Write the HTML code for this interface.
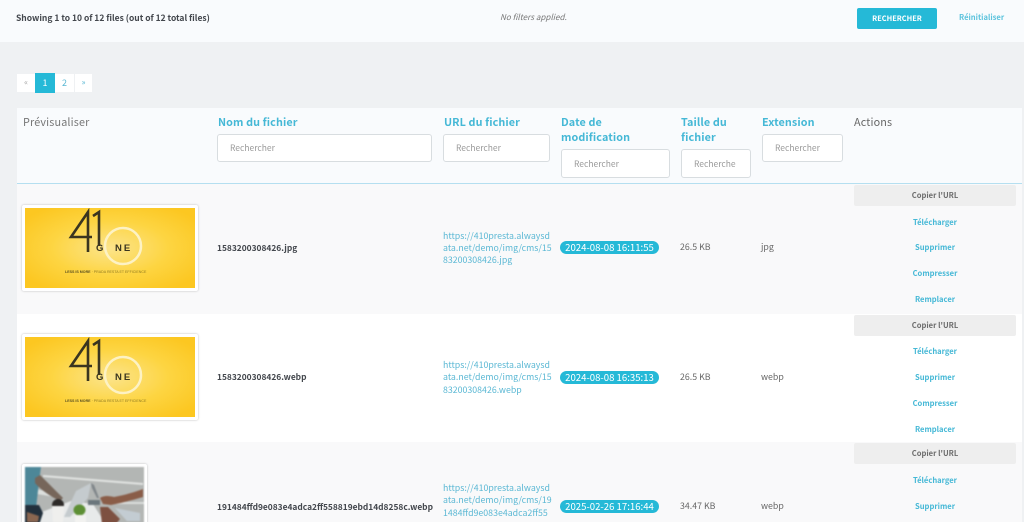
<!DOCTYPE html>
<html><head><meta charset="utf-8"><style>
html,body{margin:0;padding:0;width:1024px;height:522px;overflow:hidden;background:#eff1f3}
body{position:relative;font-family:"Noto Sans CJK SC","Liberation Sans",sans-serif;color:#666}
.a{position:absolute;white-space:nowrap}
.bar{left:0;top:0;width:1024px;height:42px;background:#f9fbfd}
.h{font-size:10.8px;line-height:15px;color:#45b8d6;font-weight:700;letter-spacing:.1px}
.ip{background:#fff;border:1px solid #d8dde0;border-radius:3px;box-sizing:border-box;font-size:8.5px;color:#999;padding-left:12px}
.row{left:17px;width:1005px}
.t{font-size:8.8px;line-height:12px}
.n{color:#43474d;font-weight:700;font-size:8.4px}
.u{color:#5bb8d4;font-size:8.8px;line-height:12.4px}
.d{background:#25b9d7;color:#fff;border-radius:7px;height:13px;line-height:13px;font-size:9.6px;text-align:center}
.c{left:854px;width:162px;height:21px;background:#eeeeee;text-align:center;line-height:22px;font-size:7.6px;font-weight:700;color:#6c6c6c;border-radius:2px}
.l{left:854px;width:162px;text-align:center;font-size:7.6px;line-height:12px;font-weight:700;color:#45b8d6}
.th{background:#fff;box-shadow:0 0 2px #bbb;border-radius:2px;box-sizing:border-box;padding:3px}
</style></head><body>
<div class="a bar"></div>
<div class="a" style="left:16px;top:12px;font-size:8.5px;line-height:12px;font-weight:700;color:#43474d">Showing 1 to 10 of 12 files (out of 12 total files)</div>
<div class="a" style="left:500px;top:12px;font-size:8.1px;line-height:12px;font-style:italic;color:#777">No filters applied.</div>
<div class="a" style="left:857px;top:8px;width:80px;height:21px;background:#25b9d7;border-radius:2px;color:#fff;font-size:7.4px;font-weight:700;line-height:21px;text-align:center">RECHERCHER</div>
<div class="a" style="left:959px;top:12px;font-size:7.6px;line-height:12px;font-weight:700;color:#5cc3dd">Réinitialiser</div>

<div class="a" style="left:17px;top:74px;width:18px;height:18px;background:#fff;color:#aaa;font-size:8px;text-align:center;line-height:18px">«</div>
<div class="a" style="left:35px;top:73px;width:20px;height:20px;background:#25b9d7;color:#fff;font-size:9px;text-align:center;line-height:20px">1</div>
<div class="a" style="left:55px;top:74px;width:19px;height:18px;background:#fff;color:#5bb8d4;font-size:9px;text-align:center;line-height:18px">2</div>
<div class="a" style="left:75px;top:74px;width:17px;height:18px;background:#fff;color:#5bb8d4;font-size:8px;text-align:center;line-height:18px">»</div>

<div class="a" style="left:17px;top:108px;width:1005px;height:75px;background:#f9fbfd"></div>
<div class="a" style="left:17px;top:183px;width:1005px;height:1px;background:#b5dff0"></div>
<div class="a row" style="top:184px;height:130px;background:#f9f9fa"></div>
<div class="a row" style="top:314px;height:128px;background:#fff"></div>
<div class="a row" style="top:442px;height:80px;background:#f9f9fa"></div>

<div class="a h" style="left:23px;top:115px;color:#777;font-weight:400;letter-spacing:.15px">Prévisualiser</div>
<div class="a h" style="left:218px;top:115px">Nom du fichier</div>
<div class="a h" style="left:444px;top:115px">URL du fichier</div>
<div class="a h" style="left:561px;top:115px">Date de<br>modification</div>
<div class="a h" style="left:681px;top:115px">Taille du<br>fichier</div>
<div class="a h" style="left:762px;top:115px">Extension</div>
<div class="a h" style="left:854px;top:115px;color:#666;font-weight:400;letter-spacing:.15px">Actions</div>

<div class="a ip" style="left:217px;top:134px;width:215px;height:28px;line-height:26px">Rechercher</div>
<div class="a ip" style="left:443px;top:134px;width:107px;height:28px;line-height:26px">Rechercher</div>
<div class="a ip" style="left:561px;top:149px;width:109px;height:29px;line-height:28px">Rechercher</div>
<div class="a ip" style="left:681px;top:149px;width:70px;height:29px;line-height:28px;overflow:hidden">Recherche</div>
<div class="a ip" style="left:762px;top:134px;width:81px;height:28px;line-height:26px">Rechercher</div>

<svg width="0" height="0" style="position:absolute"><defs>
<radialGradient id="y" cx=".5" cy=".5" r=".62"><stop offset="0" stop-color="#fce48c"/><stop offset=".55" stop-color="#fdd542"/><stop offset="1" stop-color="#fcc721"/></radialGradient>
<symbol id="logo" viewBox="0 0 170 80">
<rect width="170" height="80" fill="url(#y)"/>
<path d="M63 44 V4 L46 29 H67" fill="none" stroke="#3a3520" stroke-width="2.6"/>
<path d="M68 8 L74 4 V38" fill="none" stroke="#3a3520" stroke-width="2.6"/>
<circle cx="98" cy="38" r="18" fill="none" stroke="#fdf2c4" stroke-width="2.5"/>
<text x="71" y="43" font-family="Liberation Sans,sans-serif" font-size="9.5" font-weight="700" fill="#3a3520">G</text>
<text x="90" y="43" font-family="Liberation Sans,sans-serif" font-size="9.5" font-weight="700" letter-spacing="2" fill="#3a3520">NE</text>
<text x="40" y="65" font-family="Liberation Sans,sans-serif" font-size="3.6" font-weight="700" fill="#5e5220">LESS IS MORE <tspan font-weight="400" fill="#927b20">· PRADA RESTA ET EFFICIENCE</tspan></text>
</symbol></defs></svg>

<div class="a th" style="left:22px;top:205px;width:176px;height:86px"><svg width="170" height="80" style="filter:blur(.35px)"><use href="#logo"/></svg></div>
<div class="a th" style="left:22px;top:334px;width:176px;height:86px"><svg width="170" height="80" style="filter:blur(.35px)"><use href="#logo"/></svg></div>
<div class="a th" style="left:22px;top:464px;width:125px;height:70px">
<svg width="119" height="64" viewBox="0 0 119 64" style="filter:blur(.8px)">
<rect width="119" height="64" fill="#b3b6b4"/>
<path d="M18 8 L118 16 V18 L18 10Z" fill="#e2e4e2"/>
<path d="M6 21 L30 26 V30 L6 26Z" fill="#dcdfdd"/>
<path d="M88 35 H119 V37 H88Z" fill="#dcdedc"/>
<path d="M0 0 H16 L14 15 L10 50 H0Z" fill="#4d8798"/>
<path d="M10 11 L15 8 C24 17 32 25 38 31 L35 34 C25 29 16 23 10 16Z" fill="#76665a"/>
<path d="M14 46 L46 34 L68 37 L80 56 H14Z" fill="#e8eaea"/>
<path d="M39 50 L45 50 L63 31 L66 16 L51 24Z" fill="#c5cbce"/>
<path d="M66 16 L69 18 L74 31 L72 31 L67 21Z" fill="#80868a"/>
<rect x="63" y="33" width="12" height="5" fill="#6b767c"/>
<circle cx="33" cy="38" r="6" fill="#2d2a28"/><path d="M27 39 H39 L38 56 H28Z" fill="#efefed"/>
<ellipse cx="54.5" cy="43" rx="6" ry="5.5" fill="#5d8f35"/><rect x="50" y="48" width="11" height="9" fill="#f2f2f0"/>
<path d="M75 31 C79 28 85 29 89 30 C100 28 110 25 118 22 V30 C108 33 96 36 86 38 L78 37Z" fill="#8a5d48"/>
<path d="M75 40 L83 40 L95 52 L91 57 H77Z" fill="#7d5040"/>
<path d="M90 41 L115 46 V54 L102 54Z" fill="#c3ccd2"/>
<path d="M0 38 H14 L18 46 L14 58 H0Z" fill="#22303c"/>
<path d="M2 45 L14 49 L13 55 H2Z" fill="#8a6650"/>
</svg></div>

<!-- row 1 -->
<div class="a t n" style="left:217px;top:242px">1583200308426.jpg</div>
<div class="a u" style="left:443px;top:229.6px">https://410presta.alwaysd<br>ata.net/demo/img/cms/15<br>83200308426.jpg</div>
<div class="a d" style="left:560px;top:241px;width:99px">2024-08-08 16:11:55</div>
<div class="a t" style="left:680px;top:241px">26.5 KB</div>
<div class="a t" style="left:761px;top:241px">jpg</div>
<div class="a c" style="top:185px">Copier l'URL</div>
<div class="a l" style="top:217px">Télécharger</div>
<div class="a l" style="top:242px">Supprimer</div>
<div class="a l" style="top:268px">Compresser</div>
<div class="a l" style="top:294px">Remplacer</div>

<!-- row 2 -->
<div class="a t n" style="left:217px;top:371px">1583200308426.webp</div>
<div class="a u" style="left:443px;top:359px">https://410presta.alwaysd<br>ata.net/demo/img/cms/15<br>83200308426.webp</div>
<div class="a d" style="left:560px;top:371px;width:99px">2024-08-08 16:35:13</div>
<div class="a t" style="left:680px;top:371px">26.5 KB</div>
<div class="a t" style="left:761px;top:371px">webp</div>
<div class="a c" style="top:315px">Copier l'URL</div>
<div class="a l" style="top:346px">Télécharger</div>
<div class="a l" style="top:372px">Supprimer</div>
<div class="a l" style="top:398px">Compresser</div>
<div class="a l" style="top:424px">Remplacer</div>

<!-- row 3 -->
<div class="a t n" style="left:217px;top:501px">191484ffd9e083e4adca2ff558819ebd14d8258c.webp</div>
<div class="a u" style="left:443px;top:482px">https://410presta.alwaysd<br>ata.net/demo/img/cms/19<br>1484ffd9e083e4adca2ff55</div>
<div class="a d" style="left:560px;top:500px;width:99px">2025-02-26 17:16:44</div>
<div class="a t" style="left:680px;top:500px">34.47 KB</div>
<div class="a t" style="left:761px;top:500px">webp</div>
<div class="a c" style="top:443px">Copier l'URL</div>
<div class="a l" style="top:475px">Télécharger</div>
<div class="a l" style="top:501px">Supprimer</div>
</body></html>
